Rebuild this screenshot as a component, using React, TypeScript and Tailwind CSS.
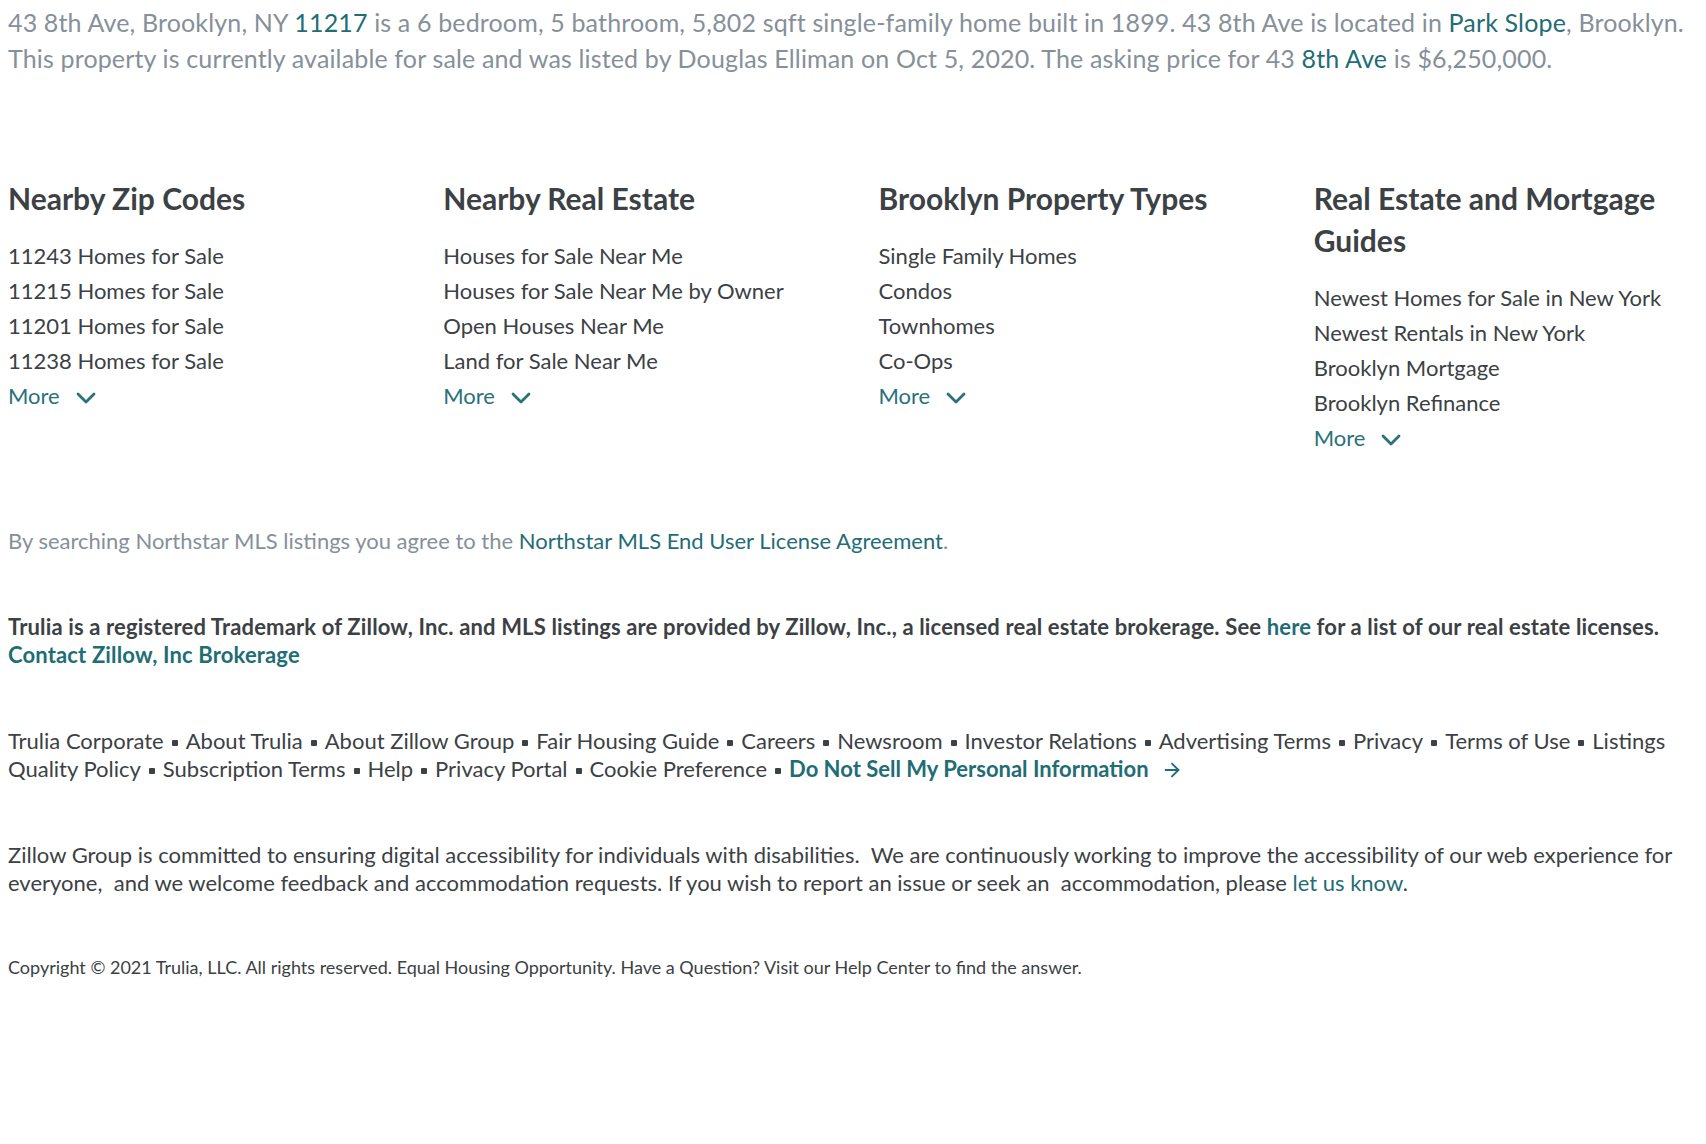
import { ArrowRight } from "lucide-react";

const columns = [
  {
    title: "Nearby Zip Codes",
    links: ["11243 Homes for Sale", "11215 Homes for Sale", "11201 Homes for Sale", "11238 Homes for Sale"],
  },
  {
    title: "Nearby Real Estate",
    links: ["Houses for Sale Near Me", "Houses for Sale Near Me by Owner", "Open Houses Near Me", "Land for Sale Near Me"],
  },
  {
    title: "Brooklyn Property Types",
    links: ["Single Family Homes", "Condos", "Townhomes", "Co-Ops"],
  },
  {
    title: "Real Estate and Mortgage Guides",
    links: ["Newest Homes for Sale in New York", "Newest Rentals in New York", "Brooklyn Mortgage", "Brooklyn Refinance"],
  },
];

const footerLinks = [
  "Trulia Corporate",
  "About Trulia",
  "About Zillow Group",
  "Fair Housing Guide",
  "Careers",
  "Newsroom",
  "Investor Relations",
  "Advertising Terms",
  "Privacy",
  "Terms of Use",
  "Listings Quality Policy",
  "Subscription Terms",
  "Help",
  "Privacy Portal",
  "Cookie Preference",
];

function Chevron() {
  return (
    <svg width="22" height="14" viewBox="0 0 22 14" fill="none" className="ml-[15px] mt-[4px]">
      <path d="M3 3L11 11L19 3" stroke="#2a7279" strokeWidth="2.8" strokeLinecap="round" strokeLinejoin="round" />
    </svg>
  );
}

function Dot() {
  return <span className="mx-[8px] inline-block h-[6px] w-[6px] rounded-[1px] bg-[#3b4144] align-middle" />;
}

export default function App() {
  return (
    <div className="min-h-[1144px] bg-white px-[8px] pt-[4px] font-['Lato',sans-serif] text-[#3b4144]">
      {/* Property summary */}
      <p className="text-[25px] leading-[36px] tracking-[0.15px] text-[#869099]">
        43 8th Ave, Brooklyn, NY <a className="text-[#1f6d75]">11217</a> is a 6 bedroom, 5 bathroom, 5,802 sqft
        single-family home built in 1899. 43 8th Ave is located in <a className="text-[#1f6d75]">Park Slope</a>,
        Brooklyn. This property is currently available for sale and was listed by Douglas Elliman on Oct 5, 2020. The
        asking price for 43 <a className="text-[#1f6d75]">8th Ave</a> is $6,250,000.
      </p>

      {/* Nearby columns */}
      <div className="mt-[101px] grid grid-cols-4 gap-x-[51px]">
        {columns.map((col) => (
          <div key={col.title}>
            <h3 className="text-[30px] font-bold leading-[42px] text-[#3b4144]">{col.title}</h3>
            <ul className="mt-[19px]">
              {col.links.map((link) => (
                <li key={link} className="text-[22px] leading-[35px] text-[#3b4144]">
                  {link}
                </li>
              ))}
              <li className="flex items-center text-[22px] leading-[35px] text-[#2a7279]">
                More
                <Chevron />
              </li>
            </ul>
          </div>
        ))}
      </div>

      <p className="mt-[72px] text-[22px] leading-[28px] text-[#869099]">
        By searching Northstar MLS listings you agree to the{" "}
        <a className="text-[#1f6d75]">Northstar MLS End User License Agreement</a>.
      </p>

      <p className="mt-[58px] text-[22px] font-bold leading-[28px] tracking-[0.15px] text-[#3b4144]">
        Trulia is a registered Trademark of Zillow, Inc. and MLS listings are provided by Zillow, Inc., a licensed real
        estate brokerage. See <a className="text-[#1f6d75]">here</a> for a list of our real estate licenses.
        <br />
        <a className="text-[#1f6d75]">Contact Zillow, Inc Brokerage</a>
      </p>

      <p className="mt-[58px] text-[22px] leading-[28px] text-[#3b4144]">
        {footerLinks.map((l) => (
          <span key={l}>
            {l}
            <Dot />
          </span>
        ))}
        <a className="font-bold text-[#1f6d75]">
          Do Not Sell My Personal Information
          <ArrowRight className="ml-[12px] inline-block h-[22px] w-[22px] align-[-4px]" strokeWidth={2} />
        </a>
      </p>

      <p className="mt-[58px] text-[22px] leading-[28px] text-[#3b4144]">
        Zillow Group is committed to ensuring digital accessibility for individuals with disabilities.&nbsp; We are
        continuously working to improve the accessibility of our web experience for everyone,&nbsp; and we welcome
        feedback and accommodation requests. If you wish to report an issue or seek an&nbsp; accommodation, please{" "}
        <a className="text-[#1f6d75]">let us know</a>.
      </p>

      <p className="mt-[59px] text-[18px] leading-[22px] text-[#3b4144]">
        Copyright © 2021 Trulia, LLC. All rights reserved. Equal Housing Opportunity. Have a Question? Visit our Help
        Center to find the answer.
      </p>
    </div>
  );
}
